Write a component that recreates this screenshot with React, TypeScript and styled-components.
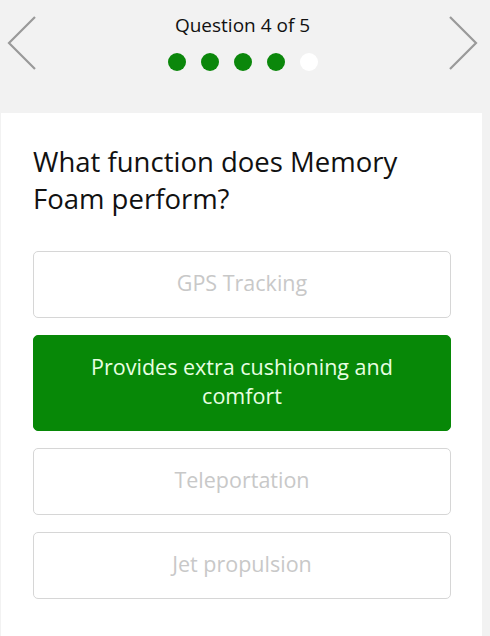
import styled, { createGlobalStyle } from 'styled-components';

const GlobalStyle = createGlobalStyle`
  html, body {
    margin: 0;
    padding: 0;
    background: #f2f2f2;
    font-family: 'Open Sans', 'Noto Sans', sans-serif;
  }
`;

const Page = styled.div`
  width: 490px;
  height: 636px;
  display: flex;
  flex-direction: column;
  background: #f2f2f2;
  overflow: hidden;
`;

const Header = styled.header`
  height: 113px;
  display: flex;
  align-items: flex-start;
  justify-content: space-between;
  padding: 0 12px 0 7px;
  box-sizing: border-box;
`;

const NavButton = styled.button`
  width: 32px;
  height: 58px;
  margin-top: 15px;
  padding: 0;
  border: none;
  background: transparent;
  display: flex;
  align-items: center;
  justify-content: center;
`;

const Progress = styled.div`
  display: flex;
  flex-direction: column;
  align-items: center;
  padding-top: 11px;
  gap: 14px;
`;

const Title = styled.div`
  font-size: 19px;
  line-height: 28px;
  color: #111;
`;

const Dots = styled.div`
  display: flex;
  gap: 15px;
`;

const Dot = styled.span<{ $done: boolean }>`
  width: 18px;
  height: 18px;
  border-radius: 50%;
  background: ${(p) => (p.$done ? '#0b870b' : '#ffffff')};
`;

const Card = styled.main`
  flex: 1;
  width: 481px;
  margin-left: 1px;
  background: #ffffff;
  padding: 30px 31px 0 32px;
  box-sizing: border-box;
`;

const Question = styled.h1`
  margin: 0 0 34px;
  font-weight: 400;
  font-size: 27.5px;
  line-height: 37px;
  color: #111;
`;

const Options = styled.div`
  display: flex;
  flex-direction: column;
  gap: 17px;
`;

const Option = styled.button<{ $selected?: boolean }>`
  width: 100%;
  min-height: 67px;
  padding: 16px 44px 20px;
  box-sizing: border-box;
  border-radius: 5px;
  border: 1px solid ${(p) => (p.$selected ? '#078807' : '#d6d6d6')};
  background: ${(p) => (p.$selected ? '#078807' : '#ffffff')};
  color: ${(p) => (p.$selected ? '#e8ffe2' : '#c8c8c8')};
  font-family: 'Open Sans', 'Noto Sans', sans-serif;
  font-size: 21.5px;
  line-height: 29px;
  text-align: center;
`;

const Chevron = ({ dir }: { dir: 'left' | 'right' }) => (
  <svg width="32" height="58" viewBox="0 0 32 58">
    <path
      d={dir === 'left' ? 'M28 2 L2 28 L28 54' : 'M4 2 L30 28 L4 54'}
      fill="none"
      stroke="#9a9a9a"
      strokeWidth="2.2"
    />
  </svg>
);

const options = [
  'GPS Tracking',
  'Provides extra cushioning and comfort',
  'Teleportation',
  'Jet propulsion',
];

export default function App() {
  return (
    <Page>
      <GlobalStyle />
      <Header>
        <NavButton aria-label="Previous">
          <Chevron dir="left" />
        </NavButton>
        <Progress>
          <Title>Question 4 of 5</Title>
          <Dots>
            {[0, 1, 2, 3, 4].map((i) => (
              <Dot key={i} $done={i < 4} />
            ))}
          </Dots>
        </Progress>
        <NavButton aria-label="Next">
          <Chevron dir="right" />
        </NavButton>
      </Header>
      <Card>
        <Question>What function does Memory Foam perform?</Question>
        <Options>
          {options.map((o, i) => (
            <Option key={o} $selected={i === 1}>
              {o}
            </Option>
          ))}
        </Options>
      </Card>
    </Page>
  );
}
